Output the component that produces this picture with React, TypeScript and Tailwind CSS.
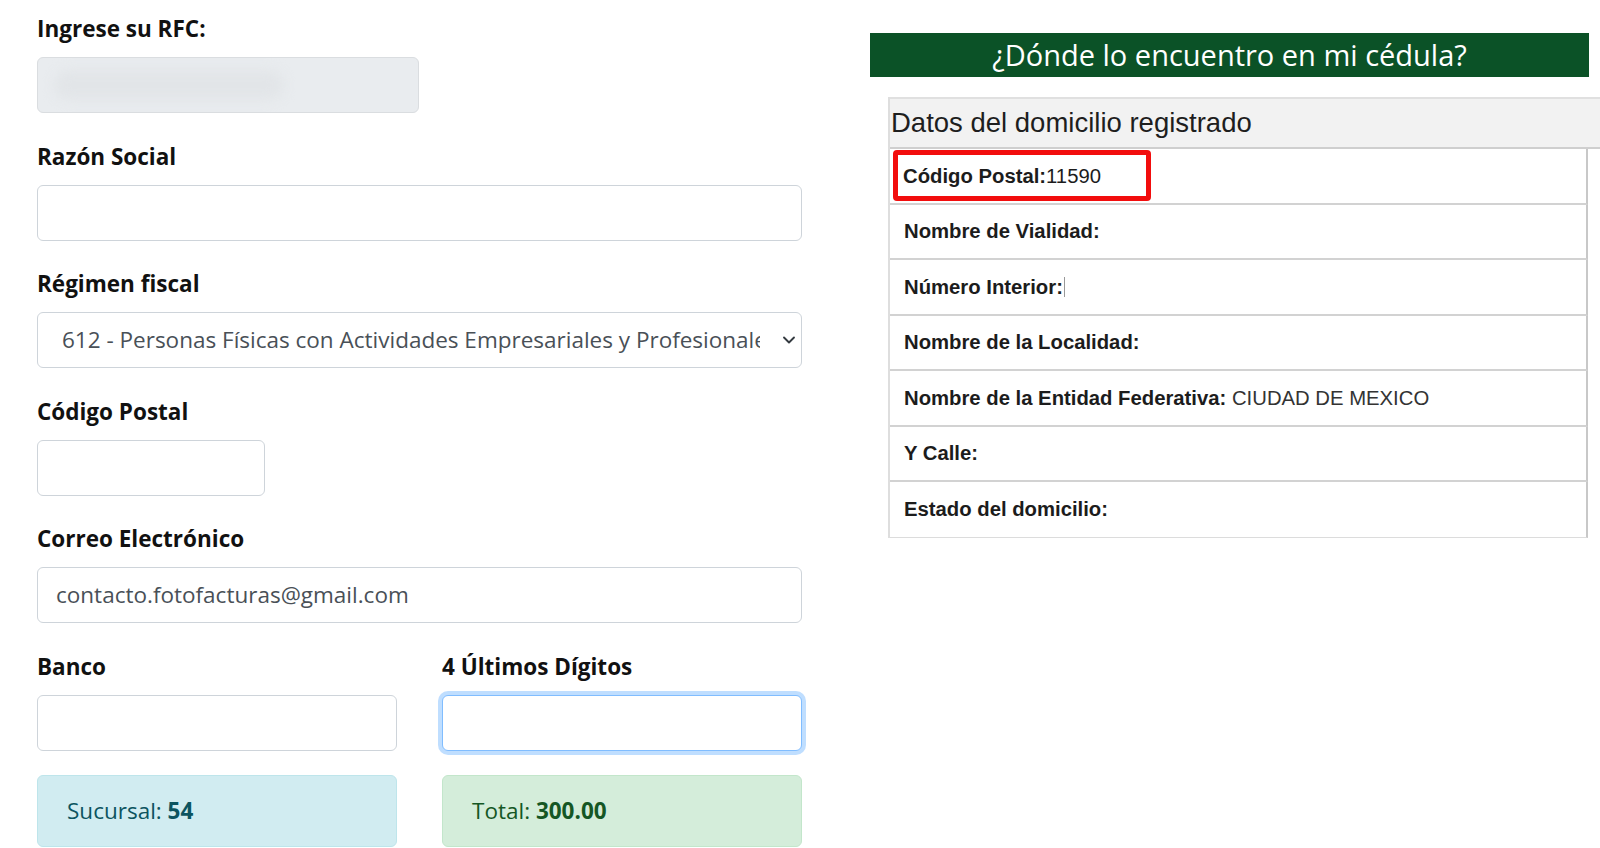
import { ChevronDown } from 'lucide-react'

const sans = { fontFamily: '"Open Sans", "Noto Sans", sans-serif' }

function Label({ children }: { children: React.ReactNode }) {
  return <div className="mb-[13px] text-[22.5px] font-bold leading-[30px] text-[#111]">{children}</div>
}

function TextInput({
  value,
  className = '',
  disabled,
  focused,
}: {
  value?: string
  className?: string
  disabled?: boolean
  focused?: boolean
}) {
  return (
    <div
      className={`relative flex h-[56px] items-center overflow-hidden rounded-[6px] border px-[18px] text-[22.5px] text-[#495057] ${
        disabled ? 'border-[#dadde0] bg-[#e9ecef]' : 'bg-white'
      } ${
        focused
          ? 'border-[#80bdff] shadow-[0_0_0_4px_rgba(0,123,255,0.25)]'
          : disabled
            ? ''
            : 'border-[#ced4da]'
      } ${className}`}
    >
      {value}
      {disabled && (
        <div className="absolute left-[16px] top-[12px] h-[30px] w-[230px] rounded-full bg-[#e2e5e8] blur-[6px]" />
      )}
    </div>
  )
}

function Field({
  label,
  children,
}: {
  label: string
  children: React.ReactNode
}) {
  return (
    <div className="mb-[28.5px]">
      <Label>{label}</Label>
      {children}
    </div>
  )
}

function FormColumn() {
  return (
    <div className="w-[765px] shrink-0 pt-[14px]" style={sans}>
      <Field label="Ingrese su RFC:">
        <TextInput disabled className="w-[382px]" />
      </Field>
      <Field label="Razón Social">
        <TextInput />
      </Field>
      <Field label="Régimen fiscal">
        <div className="flex h-[56px] items-center justify-between rounded-[6px] border border-[#ced4da] bg-white pl-[24px] pr-[2px] text-[22.5px] text-[#495057]">
          <span className="w-[698px] overflow-hidden whitespace-nowrap">
            612 - Personas Físicas con Actividades Empresariales y Profesionales
          </span>
          <ChevronDown className="h-[20px] w-[20px] text-[#343a40]" strokeWidth={2.25} />
        </div>
      </Field>
      <Field label="Código Postal">
        <TextInput className="w-[228px]" />
      </Field>
      <Field label="Correo Electrónico">
        <TextInput value="contacto.fotofacturas@gmail.com" />
      </Field>
      <div className="grid grid-cols-2 gap-x-[45px]">
        <div>
          <Label>Banco</Label>
          <TextInput />
        </div>
        <div>
          <Label>4 Últimos Dígitos</Label>
          <TextInput focused />
        </div>
      </div>
      <div className="mt-[24px] grid grid-cols-2 gap-x-[45px]">
        <div className="flex h-[72px] items-center rounded-[6px] border border-[#bee5eb] bg-[#d1ecf1] px-[29px] text-[22.5px] text-[#0c5460]">
          Sucursal:&nbsp;<b>54</b>
        </div>
        <div className="flex h-[72px] items-center rounded-[6px] border border-[#c3e6cb] bg-[#d4edda] px-[29px] text-[22.5px] text-[#155724]">
          Total:&nbsp;<b>300.00</b>
        </div>
      </div>
    </div>
  )
}

function Row({ children, last }: { children: React.ReactNode; last?: boolean }) {
  return (
    <div
      className={`flex h-[55.5px] items-center border-r-2 border-r-[#c8c8c8] pl-[14px] ${
        last ? 'border-b border-b-[#dcdcdc]' : 'border-b-2 border-b-[#d2d2d2]'
      }`}
    >
      {children}
    </div>
  )
}

function InfoColumn() {
  return (
    <div className="ml-[68px] min-w-0 flex-1 pt-[33px]">
      <div
        className="flex h-[44px] w-[719px] items-center justify-center bg-[#0b5227] text-[29px] font-medium text-white"
        style={sans}
      >
        ¿Dónde lo encuentro en mi cédula?
      </div>
      <div
        className="ml-[18px] mt-[20px] border-l-2 border-[#dedede] text-[20.3px] text-[#1c1c1c]"
        style={{ fontFamily: '"Liberation Sans", Arial, sans-serif' }}
      >
        <div className="flex h-[52px] items-center border-y-2 border-t-[#e0e0e0] border-b-[#cfcfcf] bg-[#f2f2f2] pl-[1px] text-[27.5px] text-[#1e1e1e]">
          Datos del domicilio registrado
        </div>
        <div className="mr-[12px]">
          <Row>
            <div className="ml-[-11px] flex h-[51px] w-[258px] items-center rounded-[4px] border-[5px] border-[#f20d0d] pl-[5px]">
              <b>Código Postal:</b>
              <span>11590</span>
            </div>
          </Row>
          <Row>
            <b>Nombre de Vialidad:</b>
          </Row>
          <Row>
            <b>Número Interior:</b>
            <span className="ml-[1px] h-[20px] w-[1px] bg-[#999]" />
          </Row>
          <Row>
            <b>Nombre de la Localidad:</b>
          </Row>
          <Row>
            <b>Nombre de la Entidad Federativa:</b>
            <span className="text-[#333]">&nbsp;CIUDAD DE MEXICO</span>
          </Row>
          <Row>
            <b>Y Calle:</b>
          </Row>
          <Row last>
            <b>Estado del domicilio:</b>
          </Row>
        </div>
      </div>
    </div>
  )
}

export default function App() {
  return (
    <div className="flex h-[848px] w-[1600px] overflow-hidden bg-white pl-[37px]">
      <FormColumn />
      <InfoColumn />
    </div>
  )
}
